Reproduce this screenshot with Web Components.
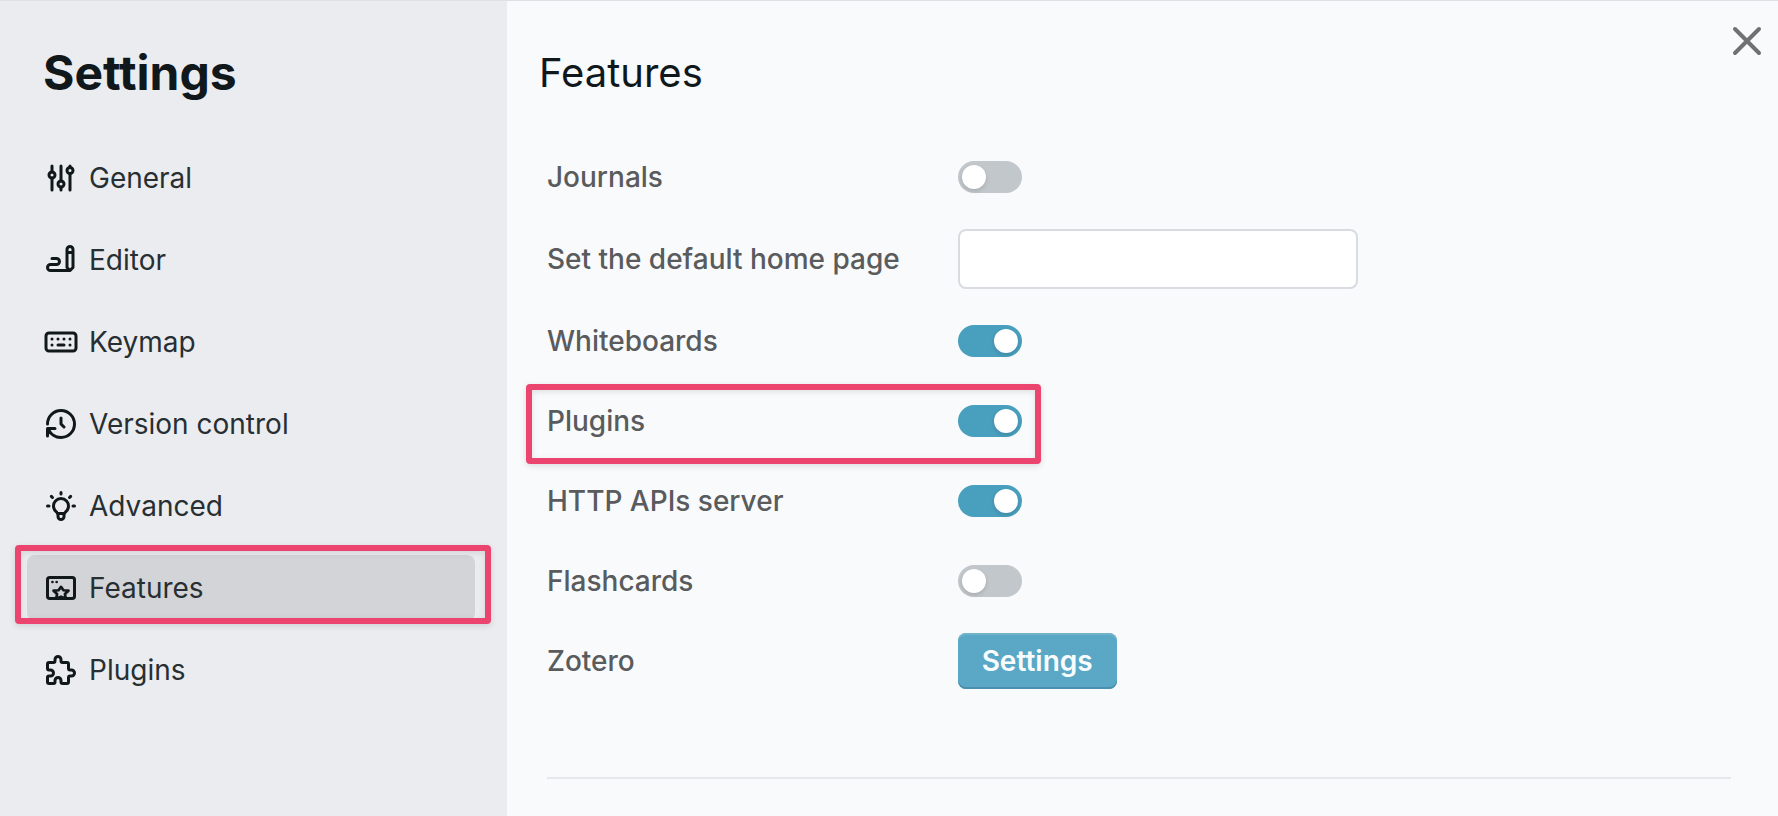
<!DOCTYPE html>
<html lang="en">
<head>
<meta charset="utf-8">
<meta name="viewport" content="width=device-width, initial-scale=1">
<title>Settings</title>
<style>
  body { margin: 0; font-family: Inter, "Liberation Sans", sans-serif; font-size: 28px; line-height: 36px; }
</style>
</head>
<body>
<settings-app>
  <nav-item slot="nav" icon="sliders">General</nav-item>
  <nav-item slot="nav" icon="writing">Editor</nav-item>
  <nav-item slot="nav" icon="keyboard">Keymap</nav-item>
  <nav-item slot="nav" icon="history">Version control</nav-item>
  <nav-item slot="nav" icon="bulb">Advanced</nav-item>
  <nav-item slot="nav" icon="feature" active highlighted>Features</nav-item>
  <nav-item slot="nav" icon="puzzle">Plugins</nav-item>

  <setting-toggle label="Journals"></setting-toggle>
  <setting-text label="Set the default home page"></setting-text>
  <setting-toggle label="Whiteboards" checked></setting-toggle>
  <setting-toggle label="Plugins" checked highlighted></setting-toggle>
  <setting-toggle label="HTTP APIs server" checked></setting-toggle>
  <setting-toggle label="Flashcards"></setting-toggle>
  <setting-action label="Zotero" action="Settings"></setting-action>
</settings-app>

<script>
const ICONS = {
  sliders: '<path d="M6 4v4M6 12v8M12 4v10M12 18v2M18 4v1M18 9v11"/><circle cx="6" cy="10" r="2"/><circle cx="12" cy="16" r="2"/><circle cx="18" cy="7" r="2"/>',
  writing: '<path d="M20 17V5a2 2 0 0 0-4 0v12l2 2zM16 7h4M18 19H5a2 2 0 1 1 0-4h4a2 2 0 1 0 0-4H6"/>',
  keyboard: '<rect x="2" y="6" width="20" height="12" rx="2"/><path d="M6 10v.01M10 10v.01M14 10v.01M18 10v.01M6 14v.01M18 14v.01M10 14h4"/>',
  history: '<path d="M3 12a9 9 0 1 1 9 9a9 9 0 0 1-8.4-5.6M3 20v-5h5M12 8v4l2 2"/>',
  bulb: '<path d="M3 12h1M12 3v1M20 12h1M5.6 5.6l.7.7M18.4 5.6l-.7.7M9 16a5 5 0 1 1 6 0a3.5 3.5 0 0 0-1 3a2 2 0 0 1-4 0a3.5 3.5 0 0 0-1-3M9.7 17h4.6"/>',
  feature: '<rect x="3" y="5" width="18" height="14" rx="1.5"/><path d="M6.3 8v.01M9.1 8v.01" stroke-width="1.8"/><path d="M8.8 19l.6-3-2.4-2.2 3.4-.3L12 11.2l1.6 2.3 3.4.3-2.4 2.2.6 3L12 17.8z" stroke-width="1.8"/>',
  puzzle: '<path d="M4 7h3a1 1 0 0 0 1-1V5a2 2 0 0 1 4 0v1a1 1 0 0 0 1 1h3a1 1 0 0 1 1 1v3a1 1 0 0 0 1 1h1a2 2 0 0 1 0 4h-1a1 1 0 0 0-1 1v3a1 1 0 0 1-1 1h-3a1 1 0 0 1-1-1v-1a2 2 0 0 0-4 0v1a1 1 0 0 1-1 1H4a1 1 0 0 1-1-1v-3a1 1 0 0 1 1-1h1a2 2 0 0 0 0-4H4a1 1 0 0 1-1-1V8a1 1 0 0 1 1-1"/>'
};

const CALLOUT = `
  :host([highlighted])::after {
    content: ""; position: absolute; box-sizing: border-box; pointer-events: none;
    border: 6px solid #eb446e; border-radius: 4px;
    box-shadow: 0 2px 6px rgba(0,0,0,.12), inset 0 2px 6px rgba(0,0,0,.1);
  }`;

class NavItem extends HTMLElement {
  constructor() {
    super();
    this.attachShadow({ mode: 'open' }).innerHTML = `
      <style>
        :host { display: block; position: relative; }
        a { display: flex; align-items: center; gap: 10px; height: 66px; padding: 0 16px; box-sizing: border-box;
            border-radius: 8px; color: #272f33; text-decoration: none; }
        :host([active]) a { background: #d3d4d8; }
        svg { width: 36px; height: 36px; flex: none; fill: none; stroke: #11181c; stroke-width: 2;
              stroke-linecap: round; stroke-linejoin: round; }
        ${CALLOUT}
        :host([highlighted])::after { inset: -10px -16px -3px -12px; }
      </style>
      <a href="#"><svg viewBox="0 0 24 24" aria-hidden="true">${ICONS[this.getAttribute('icon')] || ''}</svg><span><slot></slot></span></a>`;
    if (this.hasAttribute('active')) this.shadowRoot.querySelector('a').setAttribute('aria-current', 'page');
  }
}

class SettingRow extends HTMLElement {
  constructor() {
    super();
    this.attachShadow({ mode: 'open' }).innerHTML = `
      <style>
        :host { display: grid; grid-template-columns: 1fr 2fr; column-gap: 24px; align-items: center;
                min-height: 56px; position: relative; }
        label { color: #595b5d; font-weight: 500; white-space: nowrap; }
        ${CALLOUT}
        ${this.css}
      </style>
      <label id="label" for="control">${this.getAttribute('label')}</label>
      <div class="field">${this.control}</div>`;
  }
}

class SettingToggle extends SettingRow {
  get css() {
    return `
      .field { display: flex; }
      input { appearance: none; margin: 0; width: 64px; height: 32px; padding: 4px; box-sizing: border-box;
              display: flex; border-radius: 16px; background: #c2c7cb; cursor: pointer; }
      input::before { content: ""; width: 24px; height: 24px; border-radius: 12px; background: #fff;
                      box-shadow: 0 2px 4px rgba(0,0,0,.14); }
      input:checked { background: #499fbe; justify-content: flex-end; }
      :host([highlighted])::after { top: -9px; bottom: -15px; left: -21px; width: calc((100% - 24px) / 3 + 128px); }`;
  }
  get control() {
    return `<input id="control" type="checkbox" role="switch"${this.hasAttribute('checked') ? ' checked' : ''}>`;
  }
}

class SettingText extends SettingRow {
  get css() {
    return `
      .field { display: flex; }
      input { width: 400px; max-width: 100%; height: 60px; box-sizing: border-box; padding: 0 16px; margin: 0;
              border: 2px solid #d8dbe0; border-radius: 8px; background: #fff; font: inherit; color: #272f33; }`;
  }
  get control() { return '<input id="control" type="text">'; }
}

class SettingAction extends SettingRow {
  get css() {
    return `
      .field { display: flex; }
      button { height: 56px; padding: 0 24px; border: 0; border-radius: 8px; background: #5aa8c5; color: #f8fcfd;
               font: inherit; font-weight: 600; cursor: pointer;
               box-shadow: inset 0 2px 0 #73b2cb, inset 0 -2px 0 #4890ad; }`;
  }
  get control() { return `<button id="control" type="button">${this.getAttribute('action')}</button>`; }
}

class SettingsApp extends HTMLElement {
  constructor() {
    super();
    this.attachShadow({ mode: 'open' }).innerHTML = `
      <style>
        :host { display: grid; grid-template-columns: 507px 1fr; min-height: 100vh; box-sizing: border-box;
                border-top: 1px solid #dfe0e4; background: #f8fafc; position: relative; }
        aside { background: #ebecf0; padding: 40px 32px 0 27px; }
        h1, h2 { margin: 0; line-height: 64px; color: #11181c; }
        h1 { font-size: 48px; font-weight: 700; padding-left: 16px; }
        nav { display: flex; flex-direction: column; gap: 16px; margin-top: 40px; }
        main { padding: 40px 47px 0 32px; }
        h2 { font-size: 40px; font-weight: 400; }
        .rows { display: flex; flex-direction: column; gap: 24px; margin: 44px 0 0 8px; padding-bottom: 88px;
                border-bottom: 2px solid #e6e7ea; }
        button { position: absolute; top: 16px; right: 7px; width: 48px; height: 48px; padding: 0; border: 0;
                 background: none; cursor: pointer; }
        button svg { display: block; fill: none; stroke: #6f7173; stroke-width: 2; stroke-linecap: round; }
      </style>
      <aside>
        <h1>Settings</h1>
        <nav aria-label="Settings"><slot name="nav"></slot></nav>
      </aside>
      <main>
        <h2>Features</h2>
        <div class="rows"><slot></slot></div>
      </main>
      <button type="button" aria-label="Close"><svg width="48" height="48" viewBox="0 0 24 24" aria-hidden="true"><path d="M18 6L6 18M6 6l12 12"/></svg></button>`;
  }
}

customElements.define('nav-item', NavItem);
customElements.define('setting-toggle', SettingToggle);
customElements.define('setting-text', SettingText);
customElements.define('setting-action', SettingAction);
customElements.define('settings-app', SettingsApp);
</script>
</body>
</html>
